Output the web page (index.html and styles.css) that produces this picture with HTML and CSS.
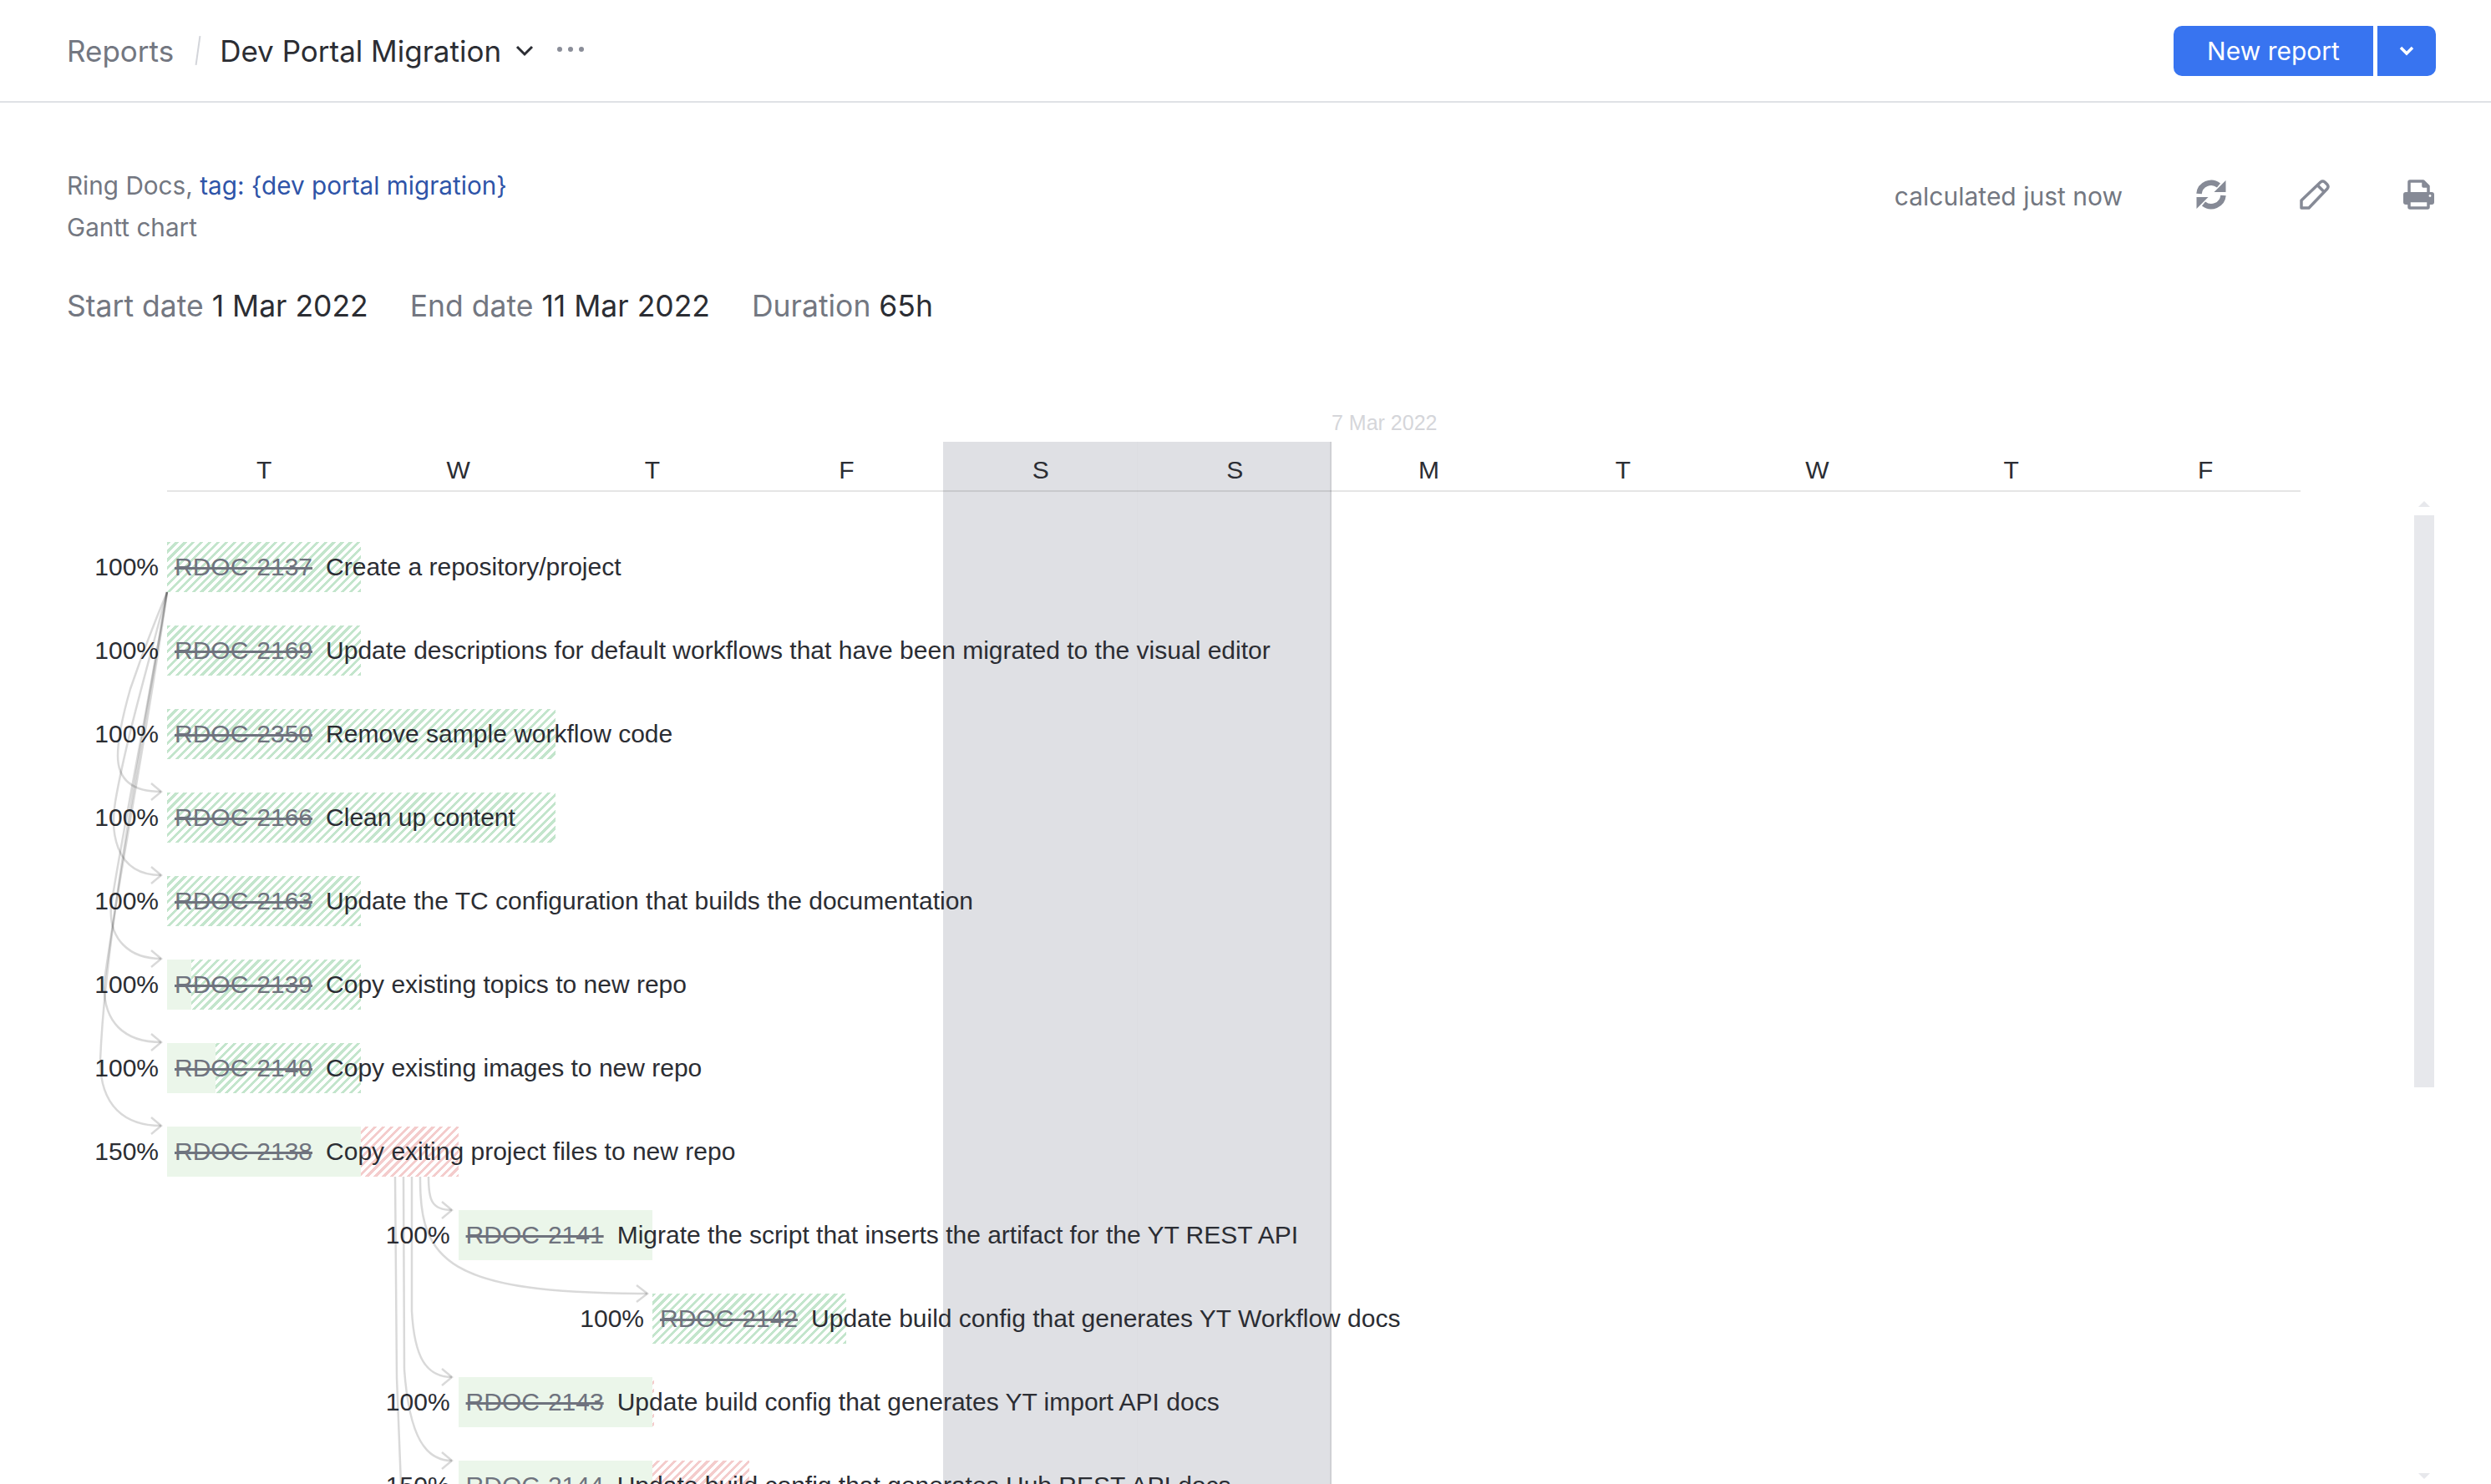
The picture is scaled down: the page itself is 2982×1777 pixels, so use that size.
FILE: index.html
```html
<!DOCTYPE html>
<html lang="en">
<head>
  <meta charset="UTF-8" />
  <title>Dev Portal Migration</title>
  <link rel="stylesheet" href="styles.css">
</head>
<body>
  <header class="topbar">
    <nav class="crumbs">
      <span class="crumb-parent">Reports</span>
      <span class="crumb-slash"></span>
      <span class="crumb-current">Dev Portal Migration</span>
      <svg class="crumb-chevron" viewBox="0 0 22 14"><path d="M2 2 L11 11 L20 2" /></svg>
      <span class="crumb-more"><i></i><i></i><i></i></span>
    </nav>
    <div class="split-button">
      <button class="btn-main">New report</button>
      <button class="btn-arrow"><svg viewBox="0 0 18 12"><path d="M2 2 L9 9 L16 2" /></svg></button>
    </div>
  </header>

  <section class="report-info">
    <div class="report-head">
      <div>
        <div class="scope">Ring Docs, <a class="scope-link">tag: {dev portal migration}</a></div>
        <div class="scope">Gantt chart</div>
      </div>
      <div class="report-tools">
        <span class="calculated">calculated just now</span>
        <svg class="tool tool-refresh" viewBox="0 0 36 36">
          <path class="tool-line" d="M3.5 17 A14.5 14.5 0 0 1 27 7" />
          <path class="tool-line" d="M32.5 19 A14.5 14.5 0 0 1 9 29" />
          <path class="tool-fill" d="M35.5 1 V15 H21.5 Z" />
          <path class="tool-fill" d="M0.5 35 V21 H14.5 Z" />
        </svg>
        <svg class="tool tool-pencil" viewBox="0 0 36 36">
          <path class="tool-thin" d="M2 34 V25 L25 3 Q27.5 1 30 3 L33 6 Q35 8.5 33 11 L11 34 Z" />
          <path class="tool-thin" d="M21.5 7 L29 14.5" />
        </svg>
        <svg class="tool tool-print" viewBox="0 0 37 36">
          <path class="tool-thin" d="M7 17 V3 Q7 2 8 2 H24 L30 8 V17" />
          <path class="tool-thin" d="M24 2 V8 H30" />
          <path class="tool-fill" d="M3 15 H34 Q37 15 37 18 V27 Q37 30 34 30 H3 Q0 30 0 27 V18 Q0 15 3 15 Z" />
          <circle class="tool-dot" cx="32" cy="19.5" r="1.4" />
          <rect class="tool-sheet" x="7" y="25.5" width="23" height="8.5" rx="1" />
        </svg>
      </div>
    </div>
    <div class="summary">
      <span><em>Start date</em> 1 Mar 2022</span>
      <span><em>End date</em> 11 Mar 2022</span>
      <span><em>Duration</em> 65h</span>
    </div>
  </section>

  <main class="chart">
    <div class="weekend"></div>

    <div class="date-row"><span class="date-mark">7 Mar 2022</span></div>
    <div class="days">
      <span>T</span><span>W</span><span>T</span><span>F</span><span>S</span><span>S</span>
      <span>M</span><span>T</span><span>W</span><span>T</span><span>F</span>
    </div>

    <div class="rows">
      <div class="row" style="--start:0">
        <span class="pct">100%</span>
        <div class="bar" style="--days:1"><s>RDOC-2137</s><span>Create a repository/project</span></div>
      </div>
      <div class="row" style="--start:0">
        <span class="pct">100%</span>
        <div class="bar" style="--days:1"><s>RDOC-2169</s><span>Update descriptions for default workflows that have been migrated to the visual editor</span></div>
      </div>
      <div class="row" style="--start:0">
        <span class="pct">100%</span>
        <div class="bar" style="--days:2"><s>RDOC-2350</s><span>Remove sample workflow code</span></div>
      </div>
      <div class="row" style="--start:0">
        <span class="pct">100%</span>
        <div class="bar" style="--days:2"><s>RDOC-2166</s><span>Clean up content</span></div>
      </div>
      <div class="row" style="--start:0">
        <span class="pct">100%</span>
        <div class="bar" style="--days:1"><s>RDOC-2163</s><span>Update the TC configuration that builds the documentation</span></div>
      </div>
      <div class="row" style="--start:0">
        <span class="pct">100%</span>
        <div class="bar" style="--days:1; --done:29px"><s>RDOC-2139</s><span>Copy existing topics to new repo</span></div>
      </div>
      <div class="row" style="--start:0">
        <span class="pct">100%</span>
        <div class="bar" style="--days:1; --done:58px"><s>RDOC-2140</s><span>Copy existing images to new repo</span></div>
      </div>
      <div class="row" style="--start:0">
        <span class="pct">150%</span>
        <div class="bar bar-late" style="--days:1.5; --done:232.4px"><s>RDOC-2138</s><span>Copy exiting project files to new repo</span></div>
      </div>
      <div class="row" style="--start:1.5">
        <span class="pct">100%</span>
        <div class="bar" style="--days:1; --done:232.4px"><s>RDOC-2141</s><span>Migrate the script that inserts the artifact for the YT REST API</span></div>
      </div>
      <div class="row" style="--start:2.5">
        <span class="pct">100%</span>
        <div class="bar" style="--days:1"><s>RDOC-2142</s><span>Update build config that generates YT Workflow docs</span></div>
      </div>
      <div class="row" style="--start:1.5">
        <span class="pct">100%</span>
        <div class="bar bar-late" style="--days:1.008; --done:232.4px"><s>RDOC-2143</s><span>Update build config that generates YT import API docs</span></div>
      </div>
      <div class="row" style="--start:1.5">
        <span class="pct">150%</span>
        <div class="bar bar-late" style="--days:1.5; --done:232.4px"><s>RDOC-2144</s><span>Update build config that generates Hub REST API docs</span></div>
      </div>
    </div>

    <svg class="links" width="1100" height="1296" viewBox="0 481 1100 1296">
      <g>
        <path d="M200 709 C182 752 168 790 156 825 C146 860 141 885 141 905 C141 935 160 948 193 948" />
        <path d="M200 709 C176 800 150 890 138 960 C133 990 134 1048 193 1048" />
        <path d="M200 709 C180 830 146 1000 133 1085 C130 1125 155 1148 193 1148" />
        <path d="M200 709 C176 880 140 1060 125 1175 C122 1225 150 1248 193 1248" />
        <path d="M200 709 C168 900 126 1120 120 1270 C120 1325 150 1348 193 1348" />
        <path d="M513 1409 C513 1436 516 1449 541 1449" />
        <path d="M503 1409 C502 1510 535 1549 775 1549" />
        <path d="M493 1409 L493 1570 C496 1625 510 1649 541 1649" />
        <path d="M483 1409 L484 1640 C490 1722 510 1749 541 1749" />
        <path d="M473 1409 L475 1650 L480 1777" />
        <path d="M181 938 L193 948 L181 958" />
        <path d="M181 1038 L193 1048 L181 1058" />
        <path d="M181 1138 L193 1148 L181 1158" />
        <path d="M181 1238 L193 1248 L181 1258" />
        <path d="M181 1338 L193 1348 L181 1358" />
        <path d="M529 1439 L541 1449 L529 1459" />
        <path d="M762 1539 L775 1549 L762 1559" />
        <path d="M529 1639 L541 1649 L529 1659" />
        <path d="M529 1739 L541 1749 L529 1759" />
      </g>
    </svg>

    <div class="scrollbar">
      <span class="scroll-up"></span>
      <span class="scroll-thumb"></span>
      <span class="scroll-down"></span>
    </div>
  </main>
</body>
</html>
```

FILE: styles.css
```css
* {
  box-sizing: border-box;
}

html,
body {
  height: 100%;
}

body {
  margin: 0;
  overflow: hidden;
  background: #fff;
  color: #2b2d33;
  font-family: Inter, 'Liberation Sans', sans-serif;
}

.topbar {
  height: 123px;
  display: flex;
  align-items: center;
  justify-content: space-between;
  padding: 0 66px 0 80px;
  border-bottom: 2px solid #dfe1e5;
}

.crumbs {
  display: flex;
  align-items: center;
  font-size: 35px;
}

.crumb-parent {
  color: #737781;
}

.crumb-slash {
  width: 2px;
  height: 35px;
  margin: 0 25px 0 28px;
  background: #d3d5da;
  transform: rotate(8deg);
}

.crumb-chevron {
  width: 22px;
  height: 14px;
  margin-left: 17px;
}

.crumb-chevron path {
  fill: none;
  stroke: #2b2d33;
  stroke-width: 3;
}

.crumb-more {
  display: flex;
  gap: 7px;
  margin-left: 28px;
  margin-top: -4px;
}

.crumb-more i {
  width: 6px;
  height: 6px;
  border-radius: 50%;
  background: #8a8d98;
}

.split-button {
  display: flex;
  gap: 5px;
}

.split-button button {
  height: 60px;
  border: none;
  background: #3874f0;
  color: #fff;
  font-family: inherit;
  font-size: 30px;
  padding: 0;
}

.btn-main {
  width: 239px;
  border-radius: 10px 0 0 10px;
}

.btn-arrow {
  width: 70px;
  border-radius: 0 10px 10px 0;
  display: flex;
  align-items: center;
  justify-content: center;
}

.btn-arrow svg {
  width: 18px;
  height: 12px;
}

.btn-arrow path {
  fill: none;
  stroke: #fff;
  stroke-width: 3.5;
}

.report-info {
  padding: 74px 64px 0 80px;
}

.report-head {
  display: flex;
  justify-content: space-between;
}

.scope {
  font-size: 29.7px;
  line-height: 50px;
  color: #737781;
}

.scope-link {
  color: #2e54a8;
}

.report-tools {
  display: flex;
  align-items: center;
  height: 76px;
  padding-right: 4px;
}

.calculated {
  font-size: 30px;
  color: #737781;
  margin-right: 88px;
}

.tool {
  width: 36px;
  height: 36px;
  margin-top: -4px;
}

.tool-pencil {
  margin-left: 88px;
}

.tool-print {
  width: 37px;
  margin-left: 88px;
}

.tool-line,
.tool-thin {
  fill: none;
  stroke: #868a96;
}

.tool-line {
  stroke-width: 6.5;
}

.tool-thin {
  stroke-width: 3.5;
  stroke-linejoin: round;
}

.tool-fill {
  fill: #868a96;
}

.tool-dot {
  fill: #fff;
}

.tool-sheet {
  fill: #fff;
  stroke: #868a96;
  stroke-width: 3.5;
}

.summary {
  display: flex;
  gap: 50px;
  margin-top: 45px;
  font-size: 35.5px;
  line-height: 50px;
}

.summary em {
  font-style: normal;
  color: #737781;
}

.chart {
  position: relative;
  height: 1296px;
  margin-top: 89px;
  overflow: hidden;
  font-family: 'Liberation Sans', Arial, sans-serif;
  font-size: 30px;
}

.weekend {
  position: absolute;
  top: 48px;
  bottom: 0;
  left: 1129px;
  width: 465px;
  background: linear-gradient(#dcdde1, #dcdde1) no-repeat 232px 0 / 1px 100%, #dfe0e4;
  border-right: 2px solid #cfd0d4;
}

.date-row {
  position: relative;
  height: 48px;
  padding-left: 1594px;
  font-size: 25px;
  line-height: 50px;
  color: #d5d6da;
}

.days {
  position: relative;
  display: grid;
  grid-template-columns: repeat(11, 232.4px);
  height: 60px;
  margin-left: 200px;
  width: 2554px;
  border-bottom: 2px solid rgba(0, 0, 0, 0.1);
  text-align: center;
  line-height: 68px;
}

.rows {
  position: relative;
  padding-top: 60px;
}

.row {
  display: flex;
  height: 60px;
  margin-bottom: 40px;
  margin-left: calc(var(--start) * 232.4px);
  line-height: 60px;
}

.pct {
  width: 190px;
  text-align: right;
  flex-shrink: 0;
  margin-right: 10px;
}

.bar {
  --done: 0px;
  --solid: #ebf6ea;
  --stripe: #c3e5cc;
  display: flex;
  gap: 16px;
  width: calc(var(--days) * 232.4px);
  padding-left: 9px;
  white-space: nowrap;
  background:
    linear-gradient(var(--solid), var(--solid)) no-repeat 0 0 / var(--done) 100%,
    repeating-linear-gradient(135deg, var(--stripe) 0 3px, #fff 3px 7px);
}

.bar-late {
  --stripe: #f4cccc;
}

.bar s {
  color: #6f737e;
  text-decoration-thickness: 3px;
  flex-shrink: 0;
}

.bar span {
  flex-shrink: 0;
}

.links {
  position: absolute;
  top: 0;
  left: 0;
}

.links path {
  fill: none;
  stroke: rgba(0, 0, 0, 0.15);
  stroke-width: 2.5;
}

.scrollbar {
  position: absolute;
  top: 119px;
  bottom: 6px;
  left: 2890px;
  width: 24px;
  display: flex;
  flex-direction: column;
  align-items: center;
}

.scroll-up,
.scroll-down {
  width: 0;
  height: 0;
  border-left: 7px solid transparent;
  border-right: 7px solid transparent;
}

.scroll-up {
  border-bottom: 7px solid #e7e8ec;
}

.scroll-thumb {
  width: 24px;
  height: 685px;
  margin-top: 10px;
  background: #e7e8ec;
}

.scroll-down {
  margin-top: auto;
  border-top: 7px solid #e7e8ec;
}
```
